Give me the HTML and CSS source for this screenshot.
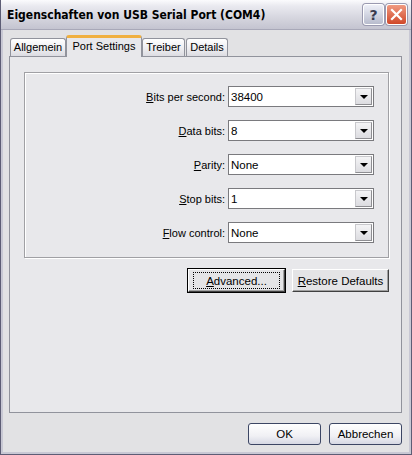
FILE: index.html
```html
<!DOCTYPE html>
<html>
<head>
<meta charset="utf-8">
<link rel="stylesheet" href="styles.css">
</head>
<body>
<div class="window">
  <div class="titlebar">
    <span class="title">Eigenschaften von USB Serial Port (COM4)</span>
    <div class="caps">
      <div class="cap help">?</div>
      <div class="cap close">
        <svg width="13" height="13" viewBox="0 0 13 13"><path d="M2 2 L11 11 M11 2 L2 11" stroke="#fff" stroke-width="2.2" stroke-linecap="square"/></svg>
      </div>
    </div>
  </div>
  <div class="client">
    <div class="tabs">
      <div class="tab t1">Allgemein</div>
      <div class="tab sel">Port Settings</div>
      <div class="tab t3">Treiber</div>
      <div class="tab t4">Details</div>
    </div>
    <div class="panel">
      <div class="group">
        <div class="row"><label><u>B</u>its per second:</label><div class="combo"><span>38400</span><div class="drop"><i></i></div></div></div>
        <div class="row"><label><u>D</u>ata bits:</label><div class="combo"><span>8</span><div class="drop"><i></i></div></div></div>
        <div class="row"><label><u>P</u>arity:</label><div class="combo"><span>None</span><div class="drop"><i></i></div></div></div>
        <div class="row"><label><u>S</u>top bits:</label><div class="combo"><span>1</span><div class="drop"><i></i></div></div></div>
        <div class="row"><label><u>F</u>low control:</label><div class="combo"><span>None</span><div class="drop"><i></i></div></div></div>
      </div>
      <div class="btnrow">
        <div class="cbtn def"><span class="focus"><u>A</u>dvanced...</span></div>
        <div class="cbtn"><span><u>R</u>estore Defaults</span></div>
      </div>
    </div>
    <div class="footer">
      <div class="xbtn">OK</div>
      <div class="xbtn">Abbrechen</div>
    </div>
  </div>
</div>
</body>
</html>
```

FILE: styles.css
```css
* { box-sizing: border-box; }
html, body { margin: 0; padding: 0; }
body {
  width: 412px; height: 455px; overflow: hidden;
  font-family: "Liberation Sans", Arial, sans-serif;
  font-size: 11px; color: #000;
}
.window {
  width: 412px; height: 455px;
  display: flex; flex-direction: column;
  background: #e2e2e4;
  border: 1px solid #5d5d75;
  border-top: none;
}
.titlebar {
  height: 30px; flex: none;
  display: flex; align-items: center; justify-content: space-between;
  padding: 0 4px 0 6px;
  background: linear-gradient(#fbfbfd 0%, #eaeaf0 20%, #d6d6df 60%, #c4c4d0 100%);
  border-bottom: 1px solid #a8a8b8;
}
.title {
  font-weight: bold; font-size: 12px; color: #000;
  font-family: "DejaVu Sans Condensed", "DejaVu Sans", sans-serif;
}
.caps { display: flex; gap: 2px; }
.cap {
  width: 21px; height: 21px; border-radius: 3px;
  display: flex; align-items: center; justify-content: center;
  border: 1px solid #fff;
  box-shadow: 0 0 0 1px #9a9ab0;
}
.help {
  background: linear-gradient(#eef0f8, #b8bccd);
  color: #3a3c50; font-weight: bold; font-size: 14px;
  font-family: "DejaVu Sans", sans-serif;
}
.close { background: linear-gradient(#f09a80, #d0482a); }
.client {
  flex: 1; display: flex; flex-direction: column;
  padding: 5px 7px 0 6px;
  border-left: 2px solid #c8c8d4;
  border-right: 2px solid #c8c8d4;
  border-bottom: 2px solid #c8c8d4;
}
.tabs { display: flex; align-items: flex-end; height: 21px; position: relative; z-index: 1; }
.tab {
  height: 18px; line-height: 16px; text-align: center;
  border: 1px solid #91939c; border-bottom: none;
  border-radius: 3px 3px 0 0;
  background: linear-gradient(#ffffff, #ececef 60%, #dcdce2);
  margin-right: 1px;
}
.t1 { width: 56px; margin-left: 1px; margin-right: 0; }
.t3 { width: 43px; }
.t4 { width: 42px; }
.tab.sel {
  width: 76px;
  line-height: 17px;
  margin: 0 0 -1px 0;
  background: #e8e8eb;
  border-top: 3px solid #f0b040;
  height: 22px;
}
.panel {
  width: 393px; height: 357px;
  border: 1px solid #91939c;
  background: #e8e8eb;
  padding: 15px 12px 0 14px;
  display: flex; flex-direction: column;
}
.group {
  width: 365px; height: 186px;
  border: 1px solid #a0a0a4;
  box-shadow: inset 1px 1px 0 #fff, 1px 1px 0 #fff;
  padding: 13px 14px 0 0;
  display: flex; flex-direction: column; gap: 13px;
}
.row { display: flex; justify-content: flex-end; align-items: center; gap: 3px; height: 21px; }
.row label { white-space: nowrap; }
.combo {
  width: 146px; height: 21px;
  border: 1px solid #7a7a7e;
  background: #fff;
  display: flex; align-items: center; justify-content: space-between;
  padding: 0 1px 0 2px;
}
.combo span { font-size: 11.5px; }
.drop {
  width: 17px; height: 17px;
  background: linear-gradient(#f4f4f6, #dcdce0);
  border: 1px solid #c8c8cc;
  border-right-color: #8e8e92; border-bottom-color: #8e8e92;
  display: flex; align-items: center; justify-content: center;
}
.drop i {
  width: 0; height: 0;
  border-left: 4px solid transparent; border-right: 4px solid transparent;
  border-top: 4px solid #000;
  margin-top: 1px;
}
.btnrow {
  display: flex; justify-content: flex-end; gap: 7px;
  width: 365px; margin-top: 11px;
}
.cbtn {
  width: 97px; height: 23px;
  background: #e4e4e6;
  border: 1px solid; border-color: #fff #404040 #404040 #fff;
  box-shadow: inset -1px -1px 0 #a0a0a0;
  display: flex; align-items: center; justify-content: center;
  font-size: 11.5px;
}
.cbtn.def {
  outline: 1px solid #000;
  outline-offset: 0;
}
.cbtn .focus {
  display: flex; align-items: center; justify-content: center;
  width: 85px; height: 15px;
  outline: 1px dotted #000;
}
.footer {
  display: flex; justify-content: flex-end; gap: 8px;
  padding-top: 10px;
}
.xbtn {
  width: 73px; height: 22px;
  border: 1px solid #3c4664;
  border-radius: 3px;
  background: linear-gradient(#ffffff, #f0f0f4 60%, #d6d8e4);
  display: flex; align-items: center; justify-content: center;
  font-size: 11.5px;
}
```
